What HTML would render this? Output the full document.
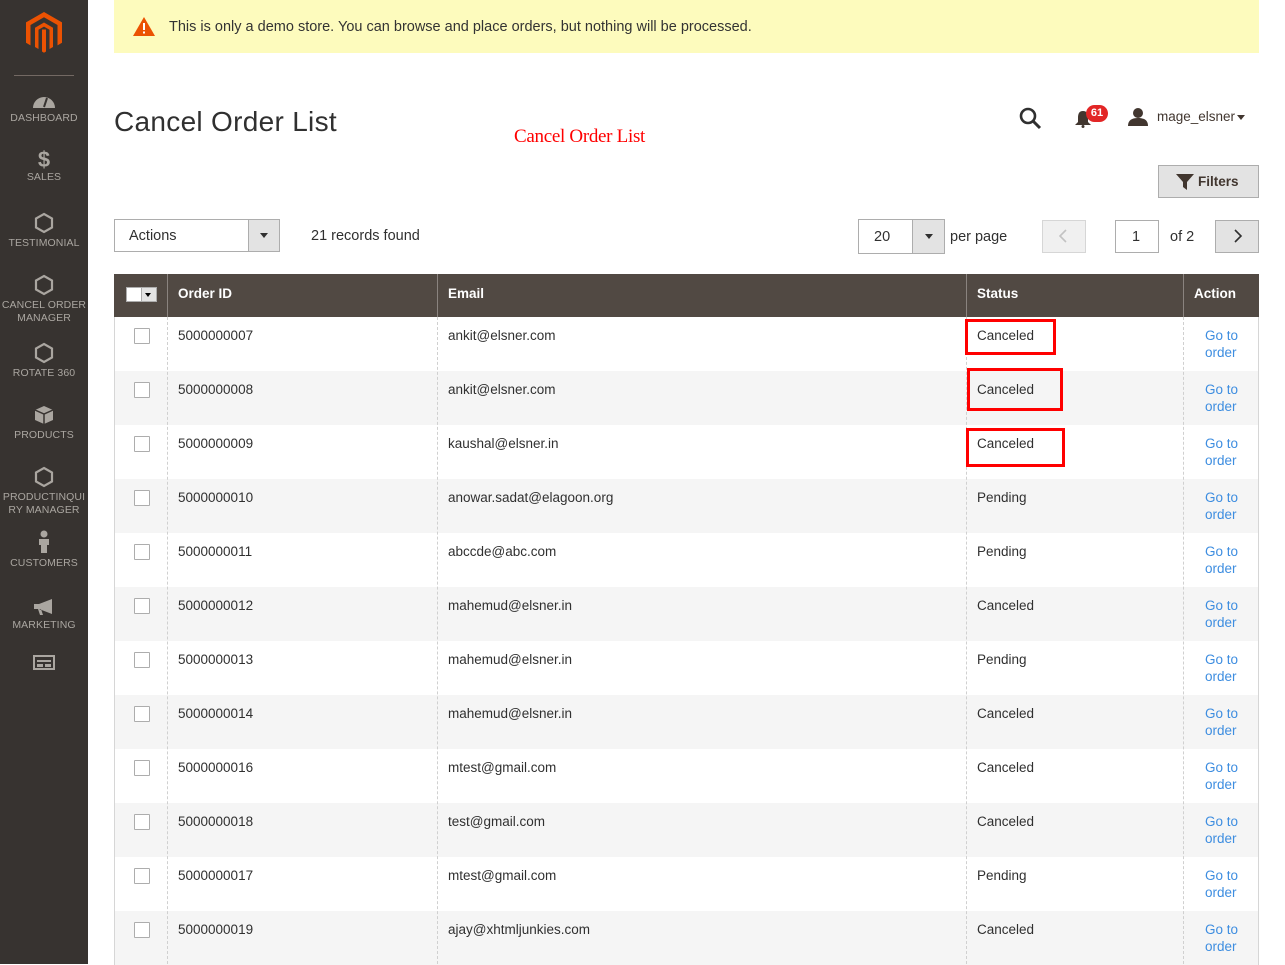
<!DOCTYPE html>
<html><head><meta charset="utf-8"><style>
*{box-sizing:border-box;margin:0;padding:0}
body{width:1285px;height:964px;overflow:hidden;background:#fff;font-family:"Liberation Sans",sans-serif;color:#303030;position:relative;font-size:13.5px}
.a{position:absolute}
#side{left:0;top:0;width:88px;height:964px;background:#373330}
.nav{position:absolute;left:0;width:88px;text-align:center;color:#aaa6a0;font-size:10.5px;line-height:13px;letter-spacing:0.1px}
.nav svg{display:block;margin:0 auto 3px}
.row{position:absolute;left:114px;width:1145px;height:54px;border-left:1px solid #d6d6d6;border-right:1px solid #d6d6d6}
.row.g{background:#f5f5f5}
.vl{position:absolute;top:316px;bottom:0;border-left:1px dashed #d0d0d0}
.cb{position:absolute;left:19px;top:11px;width:16px;height:16px;border:1px solid #adadad;background:#fff;border-radius:1px}
.t{position:absolute;top:11px;font-size:13.5px;color:#303030}
.lnk{position:absolute;left:1090px;top:10px;color:#3d8de0;font-size:13.5px;line-height:17px}
.red{position:absolute;border:3.5px solid #f00}
</style></head><body>
<div id="side" class="a">
<svg class="a" style="left:26px;top:12px" width="36" height="41" viewBox="0 0 36 41"><path d="M18 0L36 10.4V30.8L31.5 33.4V13L18 5.3L4.5 13V33.4L0 30.8V10.4Z" fill="#eb5202"/><path d="M18 10.5L27 15.7V35L23.5 37V17.8L18 14.6L12.5 17.8V37L9 35V15.7Z" fill="#eb5202"/><path d="M16 17.5H20V39.5L18 40.7L16 39.5Z" fill="#eb5202"/></svg>
<div class="a" style="left:14px;top:75px;width:60px;height:1px;background:#736963"></div>
<div class="nav" style="top:93px"><svg width="24" height="16" viewBox="0 0 24 16"><path d="M1 15A11 11 0 0 1 23 15Z" fill="#aaa6a0"/><path d="M12 14L15 5" stroke="#373330" stroke-width="2"/></svg>DASHBOARD</div>
<div class="nav" style="top:149px"><div style="font-size:22px;font-weight:bold;line-height:22px;color:#aaa6a0">$</div>SALES</div>
<div class="nav" style="top:212px"><svg width="20" height="22" viewBox="0 0 20 22"><path d="M10 2L18 6.5V15.5L10 20L2 15.5V6.5Z" fill="none" stroke="#aaa6a0" stroke-width="2.2"/></svg>TESTIMONIAL</div>
<div class="nav" style="top:274px"><svg width="20" height="22" viewBox="0 0 20 22"><path d="M10 2L18 6.5V15.5L10 20L2 15.5V6.5Z" fill="none" stroke="#aaa6a0" stroke-width="2.2"/></svg>CANCEL ORDER<br>MANAGER</div>
<div class="nav" style="top:342px"><svg width="20" height="22" viewBox="0 0 20 22"><path d="M10 2L18 6.5V15.5L10 20L2 15.5V6.5Z" fill="none" stroke="#aaa6a0" stroke-width="2.2"/></svg>ROTATE 360</div>
<div class="nav" style="top:404px"><svg width="22" height="22" viewBox="0 0 22 22"><path d="M2 6L11 2L20 6V16L11 20L2 16Z" fill="#aaa6a0"/><path d="M2 6L11 10L20 6M11 10V20" stroke="#373330" stroke-width="1.5" fill="none"/></svg>PRODUCTS</div>
<div class="nav" style="top:466px"><svg width="20" height="22" viewBox="0 0 20 22"><path d="M10 2L18 6.5V15.5L10 20L2 15.5V6.5Z" fill="none" stroke="#aaa6a0" stroke-width="2.2"/></svg>PRODUCTINQUI<br>RY MANAGER</div>
<div class="nav" style="top:530px"><svg width="14" height="24" viewBox="0 0 14 24"><circle cx="7" cy="4" r="3.5" fill="#aaa6a0"/><path d="M2 9H12V15H10V23H4V15H2Z" fill="#aaa6a0"/></svg>CUSTOMERS</div>
<div class="nav" style="top:598px"><svg width="24" height="18" viewBox="0 0 24 18"><path d="M2 6H7L20 1V16L7 11H2Z M6 11L8 17H11L9 11Z" fill="#aaa6a0"/></svg>MARKETING</div>
<div class="nav" style="top:655px"><svg width="22" height="16" viewBox="0 0 22 16"><rect x="1" y="1" width="20" height="13" fill="none" stroke="#aaa6a0" stroke-width="2"/><rect x="4" y="5" width="14" height="2" fill="#aaa6a0"/><rect x="4" y="9" width="6" height="3" fill="#aaa6a0"/><rect x="12" y="9" width="6" height="3" fill="#aaa6a0"/></svg></div>
</div>

<div class="a" style="left:114px;top:0;width:1145px;height:53px;background:#fdfbbd"></div>
<svg class="a" style="left:133px;top:17px" width="22" height="19" viewBox="0 0 22 19"><path d="M11 0L22 19H0Z" fill="#eb5202"/><rect x="10" y="6" width="2" height="7" fill="#fff"/><rect x="10" y="14.5" width="2" height="2" fill="#fff"/></svg>
<div class="a" style="left:169px;top:19px;font-size:14.5px;color:#333">This is only a demo store. You can browse and place orders, but nothing will be processed.</div>

<div class="a" style="left:114px;top:106px;font-size:28px;color:#303030;letter-spacing:0.3px">Cancel Order List</div>
<div class="a" style="left:514px;top:126px;font-family:'Liberation Serif',serif;font-size:19px;color:#f00;letter-spacing:-0.3px">Cancel Order List</div>

<svg class="a" style="left:1019px;top:107px" width="23" height="23" viewBox="0 0 23 23"><circle cx="9" cy="9" r="7" fill="none" stroke="#303030" stroke-width="2.6"/><path d="M14 14L21 21" stroke="#303030" stroke-width="3"/></svg>
<svg class="a" style="left:1074px;top:110px" width="18" height="18" viewBox="0 0 18 18"><path d="M9 1C5 1 4 4 4 8V12L1 15H17L14 12V8C14 4 13 1 9 1Z" fill="#41362f"/><circle cx="9" cy="16.5" r="1.5" fill="#41362f"/></svg>
<div class="a" style="left:1086px;top:105px;width:22px;height:17px;border-radius:9px;background:#e22626;color:#fff;font-size:11px;font-weight:bold;text-align:center;line-height:17px">61</div>
<svg class="a" style="left:1128px;top:107px" width="20" height="20" viewBox="0 0 20 20"><circle cx="10" cy="6" r="5" fill="#41362f"/><path d="M0 19C0 13 4 11 10 11C16 11 20 13 20 19Z" fill="#41362f"/></svg>
<div class="a" style="left:1157px;top:109px;font-size:13.5px;color:#41362f">mage_elsner</div>
<div class="a" style="left:1237px;top:115px;border:4px solid transparent;border-top:5px solid #41362f"></div>

<div class="a" style="left:1158px;top:165px;width:101px;height:33px;background:#e3e3e3;border:1px solid #adadad"></div>
<svg class="a" style="left:1176px;top:174px" width="18" height="16" viewBox="0 0 18 16"><path d="M0 0H18L11 8V16L7 13V8Z" fill="#41362f"/></svg>
<div class="a" style="left:1198px;top:174px;font-size:13.5px;font-weight:bold;color:#41362f">Filters</div>

<div class="a" style="left:114px;top:219px;width:166px;height:33px;border:1px solid #adadad;background:#fff"></div>
<div class="a" style="left:248px;top:220px;width:31px;height:31px;background:#e3e3e3;border-left:1px solid #adadad"></div>
<div class="a" style="left:260px;top:233px;border:4px solid transparent;border-top:5px solid #303030"></div>
<div class="a" style="left:129px;top:228px;font-size:14.5px;color:#303030">Actions</div>
<div class="a" style="left:311px;top:228px;font-size:14.5px;color:#303030">21 records found</div>

<div class="a" style="left:858px;top:219px;width:87px;height:35px;border:1px solid #adadad;background:#fff"></div>
<div class="a" style="left:912px;top:220px;width:32px;height:33px;background:#e3e3e3;border-left:1px solid #adadad"></div>
<div class="a" style="left:925px;top:234px;border:4px solid transparent;border-top:5px solid #303030"></div>
<div class="a" style="left:874px;top:229px;font-size:14.5px">20</div>
<div class="a" style="left:950px;top:229px;font-size:14.5px">per page</div>
<div class="a" style="left:1042px;top:220px;width:44px;height:33px;background:#f0f0f0;border:1px solid #d6d6d6"></div>
<svg class="a" style="left:1058px;top:229px" width="10" height="14" viewBox="0 0 10 14"><path d="M8 1L2 7L8 13" fill="none" stroke="#c2c2c2" stroke-width="1.6"/></svg>
<div class="a" style="left:1115px;top:220px;width:44px;height:33px;background:#fff;border:1px solid #adadad"></div>
<div class="a" style="left:1132px;top:229px;font-size:14.5px">1</div>
<div class="a" style="left:1170px;top:229px;font-size:14.5px">of 2</div>
<div class="a" style="left:1215px;top:220px;width:44px;height:33px;background:#e3e3e3;border:1px solid #adadad"></div>
<svg class="a" style="left:1233px;top:229px" width="10" height="14" viewBox="0 0 10 14"><path d="M2 1L8 7L2 13" fill="none" stroke="#303030" stroke-width="1.6"/></svg>

<div class="a" style="left:114px;top:274px;width:1145px;height:43px;background:#514943"></div>
<div class="a" style="left:167px;top:274px;width:1px;height:43px;background:#8a837f"></div>
<div class="a" style="left:437px;top:274px;width:1px;height:43px;background:#8a837f"></div>
<div class="a" style="left:966px;top:274px;width:1px;height:43px;background:#8a837f"></div>
<div class="a" style="left:1183px;top:274px;width:1px;height:43px;background:#8a837f"></div>
<div class="a" style="left:126px;top:287px;width:31px;height:15px;background:#fff;border:1px solid #adadad"></div>
<div class="a" style="left:141px;top:288px;width:15px;height:13px;background:#e3e3e3;border-left:1px solid #adadad"></div>
<div class="a" style="left:145px;top:293px;border:3.5px solid transparent;border-top:4.5px solid #000"></div>
<div class="a" style="left:178px;top:286px;color:#fff;font-weight:bold;font-size:13.5px">Order ID</div>
<div class="a" style="left:448px;top:286px;color:#fff;font-weight:bold;font-size:13.5px">Email</div>
<div class="a" style="left:977px;top:286px;color:#fff;font-weight:bold;font-size:13.5px">Status</div>
<div class="a" style="left:1194px;top:286px;color:#fff;font-weight:bold;font-size:13.5px">Action</div>

<div class="row" style="top:317px"><div class="cb"></div><div class="t" style="left:63px">5000000007</div><div class="t" style="left:333px">ankit@elsner.com</div><div class="t" style="left:862px">Canceled</div><div class="lnk">Go to<br>order</div></div>
<div class="row g" style="top:371px"><div class="cb"></div><div class="t" style="left:63px">5000000008</div><div class="t" style="left:333px">ankit@elsner.com</div><div class="t" style="left:862px">Canceled</div><div class="lnk">Go to<br>order</div></div>
<div class="row" style="top:425px"><div class="cb"></div><div class="t" style="left:63px">5000000009</div><div class="t" style="left:333px">kaushal@elsner.in</div><div class="t" style="left:862px">Canceled</div><div class="lnk">Go to<br>order</div></div>
<div class="row g" style="top:479px"><div class="cb"></div><div class="t" style="left:63px">5000000010</div><div class="t" style="left:333px">anowar.sadat@elagoon.org</div><div class="t" style="left:862px">Pending</div><div class="lnk">Go to<br>order</div></div>
<div class="row" style="top:533px"><div class="cb"></div><div class="t" style="left:63px">5000000011</div><div class="t" style="left:333px">abccde@abc.com</div><div class="t" style="left:862px">Pending</div><div class="lnk">Go to<br>order</div></div>
<div class="row g" style="top:587px"><div class="cb"></div><div class="t" style="left:63px">5000000012</div><div class="t" style="left:333px">mahemud@elsner.in</div><div class="t" style="left:862px">Canceled</div><div class="lnk">Go to<br>order</div></div>
<div class="row" style="top:641px"><div class="cb"></div><div class="t" style="left:63px">5000000013</div><div class="t" style="left:333px">mahemud@elsner.in</div><div class="t" style="left:862px">Pending</div><div class="lnk">Go to<br>order</div></div>
<div class="row g" style="top:695px"><div class="cb"></div><div class="t" style="left:63px">5000000014</div><div class="t" style="left:333px">mahemud@elsner.in</div><div class="t" style="left:862px">Canceled</div><div class="lnk">Go to<br>order</div></div>
<div class="row" style="top:749px"><div class="cb"></div><div class="t" style="left:63px">5000000016</div><div class="t" style="left:333px">mtest@gmail.com</div><div class="t" style="left:862px">Canceled</div><div class="lnk">Go to<br>order</div></div>
<div class="row g" style="top:803px"><div class="cb"></div><div class="t" style="left:63px">5000000018</div><div class="t" style="left:333px">test@gmail.com</div><div class="t" style="left:862px">Canceled</div><div class="lnk">Go to<br>order</div></div>
<div class="row" style="top:857px"><div class="cb"></div><div class="t" style="left:63px">5000000017</div><div class="t" style="left:333px">mtest@gmail.com</div><div class="t" style="left:862px">Pending</div><div class="lnk">Go to<br>order</div></div>
<div class="row g" style="top:911px"><div class="cb"></div><div class="t" style="left:63px">5000000019</div><div class="t" style="left:333px">ajay@xhtmljunkies.com</div><div class="t" style="left:862px">Canceled</div><div class="lnk">Go to<br>order</div></div>

<div class="vl" style="left:167px;top:317px"></div>
<div class="vl" style="left:437px;top:317px"></div>
<div class="vl" style="left:966px;top:317px"></div>
<div class="vl" style="left:1183px;top:317px"></div>

<div class="red" style="left:965px;top:319px;width:91px;height:36px"></div>
<div class="red" style="left:967px;top:368px;width:96px;height:43px"></div>
<div class="red" style="left:966px;top:428px;width:99px;height:39px"></div>
</body></html>
